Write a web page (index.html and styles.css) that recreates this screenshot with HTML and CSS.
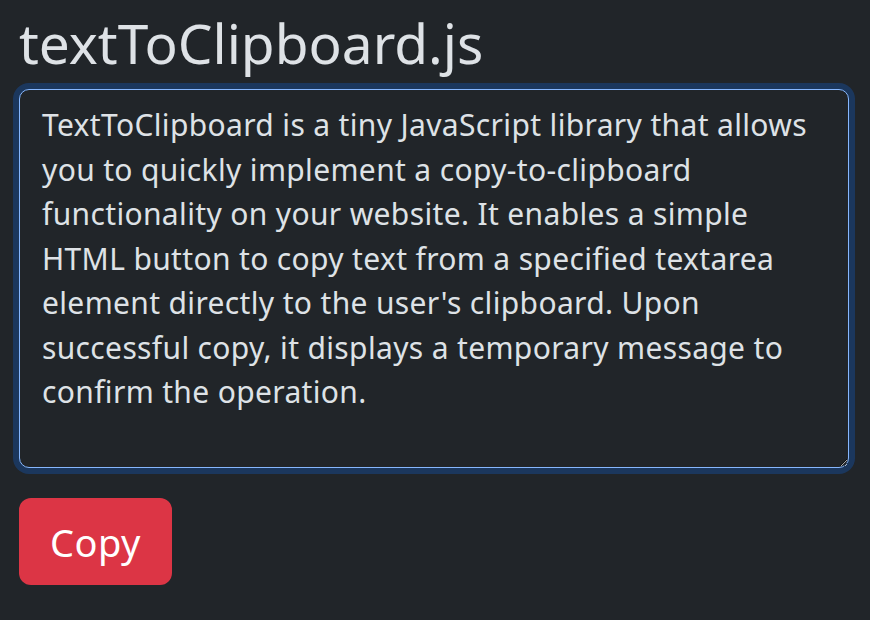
FILE: index.html
```html
<!DOCTYPE html>
<html lang="en">
<head>
    <meta charset="UTF-8">
    <meta name="viewport" content="width=device-width, initial-scale=1.0">
    <title>textToClipboard.js</title>
    <link rel="stylesheet" href="styles.css">
</head>
<body>

    <div class="container">
        <h1 class="title">textToClipboard.js</h1>

        <textarea id="copy-text" class="copy-area" autofocus>TextToClipboard is a tiny JavaScript library that allows you to quickly implement a copy-to-clipboard functionality on your website. It enables a simple HTML button to copy text from a specified textarea element directly to the user's clipboard. Upon successful copy, it displays a temporary message to confirm the operation.</textarea>

        <button class="copy-button" onclick="copyText()">Copy</button>
    </div>

    <script>
        function copyText() {
            const area = document.getElementById('copy-text');
            area.select();
            navigator.clipboard.writeText(area.value);
        }
    </script>

</body>
</html>
```

FILE: styles.css
```css
body {
    font-family: 'Noto Sans', 'Open Sans', sans-serif;
    margin: 0;
    padding: 0;
    background-color: #212529;
    color: #dee2e6;
}

.container {
    padding: 10px 19px;
}

.title {
    font-size: 55px;
    font-weight: 400;
    line-height: 1.2;
    margin: 0 0 13px 0;
}

.copy-area {
    display: block;
    box-sizing: border-box;
    width: 830px;
    height: 379px;
    padding: 13px 22px;
    font-family: inherit;
    font-size: 30px;
    letter-spacing: 0.35px;
    line-height: 44.5px;
    color: #dee2e6;
    background-color: #212529;
    border: 1px solid #86b7fe;
    border-radius: 10px;
    box-shadow: 0 0 0 6px rgba(13, 110, 253, 0.25);
    outline: none;
}

.copy-button {
    margin-top: 30px;
    background-color: #dc3545;
    color: white;
    font-family: inherit;
    font-size: 38px;
    letter-spacing: 0.5px;
    padding: 0 31px;
    height: 87px;
    border: none;
    border-radius: 12px;
    cursor: pointer;
}

.copy-button:hover {
    background-color: #bb2d3b;
}
```
